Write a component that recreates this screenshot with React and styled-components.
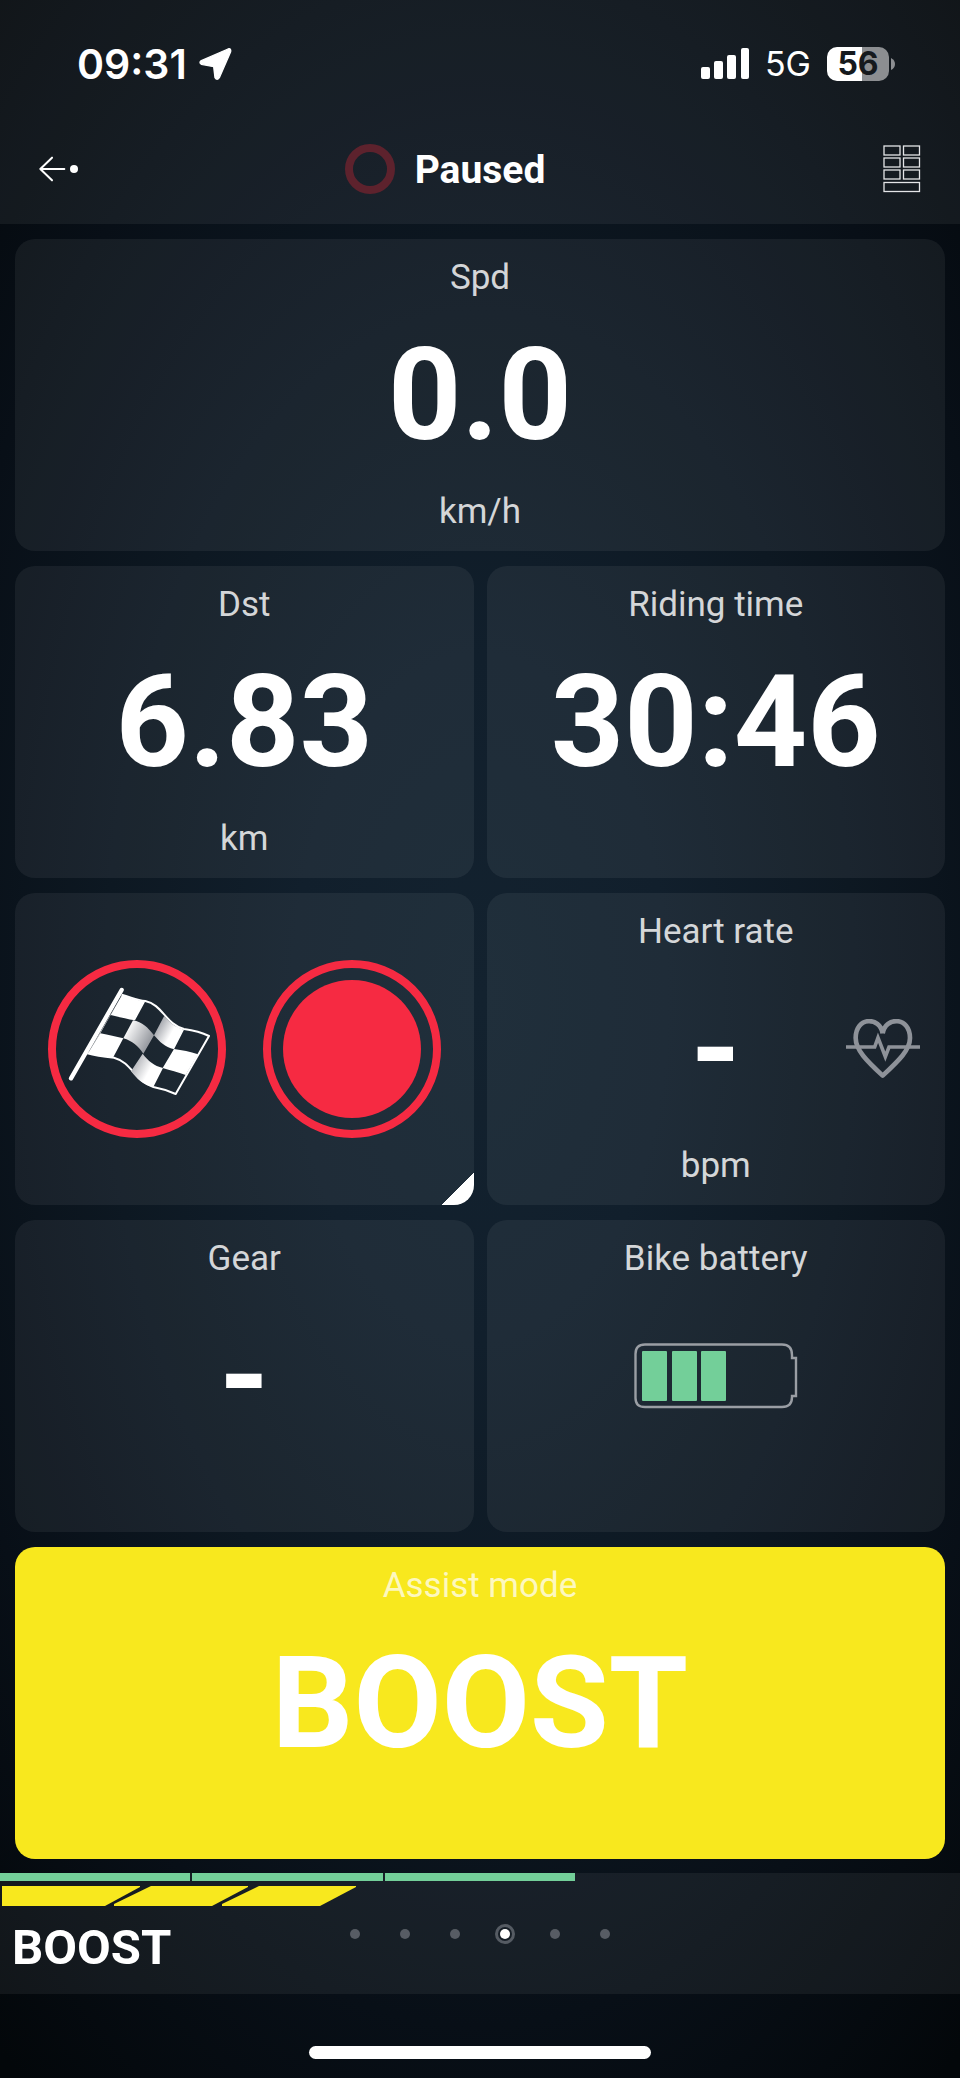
import React from "react";
import styled, { createGlobalStyle } from "styled-components";

const GlobalStyle = createGlobalStyle`
  *, *::before, *::after { box-sizing: border-box; }
  html, body { margin: 0; min-height: 100%; background: #03070b; }
  body { font-family: Roboto, "Liberation Sans", sans-serif; color: #fff; }
  button { appearance: none; border: 0; margin: 0; padding: 0; background: none; color: inherit; font: inherit; cursor: pointer; }
  svg { display: block; }
  h1, h2, p { margin: 0; }
`;

const panel = "rgba(255, 255, 255, 0.06)";

const Screen = styled.div`
  min-height: 100vh;
  display: flex;
  flex-direction: column;
  background: radial-gradient(ellipse 78% 66% at 50% 48%, #13222f 0%, #111f2c 25%, #0d1822 50%, #080f17 75%, #03070a 100%);
`;

const Header = styled.header`
  background: ${panel};
`;

const StatusBar = styled.div`
  display: flex;
  align-items: center;
  justify-content: space-between;
  height: 112px;
  padding: 16px 65px 0 77px;
  font-family: Inter, "Liberation Sans", sans-serif;
`;

const StatusGroup = styled.div`
  display: flex;
  align-items: center;
  gap: ${(p) => p.$gap}px;
`;

const Clock = styled.time`
  font-size: 41px;
  line-height: 48px;
  font-weight: 600;
`;

const Network = styled.span`
  font-size: 34px;
  line-height: 40px;
`;

const PhoneBattery = styled.div`
  display: flex;
  align-items: center;
  gap: 2px;
`;

const PhoneBatteryBody = styled.span`
  width: 62px;
  height: 34px;
  border-radius: 10px;
  background: linear-gradient(to right, #fff 56%, #8c8e91 56%);
  color: #15191d;
  font-size: 32px;
  line-height: 34px;
  font-weight: 700;
  text-align: center;
`;

const TitleBar = styled.div`
  display: flex;
  align-items: center;
  height: 112px;
  padding: 2px 39px 0;
`;

const Title = styled.div`
  flex: 1;
  display: flex;
  align-items: center;
  justify-content: center;
  gap: 20px;
  padding-right: 71px;
`;

const PausedRing = styled.span`
  width: 50px;
  height: 50px;
  border: 8px solid #5d222d;
  border-radius: 50%;
`;

const TitleText = styled.h1`
  padding-top: 2px;
  font-size: 39px;
  line-height: 48px;
  font-weight: 700;
`;

const Tiles = styled.main`
  display: grid;
  grid-template-columns: 1fr 1fr;
  gap: 15px 13px;
  padding: 15px 15px 14px;
`;

const Tile = styled.section`
  position: relative;
  display: flex;
  flex-direction: column;
  align-items: center;
  grid-column: ${(p) => (p.$wide ? "1 / -1" : "auto")};
  min-height: 312px;
  padding: 19px 20px;
  border-radius: 20px;
  background: ${(p) => (p.$accent ? "#f8e81e" : panel)};
  overflow: hidden;
`;

const Label = styled.h2`
  font-size: 35px;
  line-height: 40px;
  font-weight: 400;
  color: rgba(255, 255, 255, ${(p) => (p.$soft ? 0.72 : 0.82)});
`;

const Value = styled.div`
  display: flex;
  align-items: center;
  height: 150px;
  margin: 22px 0;
  font-size: 128px;
  line-height: 150px;
  font-weight: 700;
`;

const Unit = styled.p`
  font-size: 35px;
  line-height: 40px;
  color: rgba(255, 255, 255, 0.82);
`;

const SideIcon = styled.div`
  position: absolute;
  right: 25px;
  top: 50%;
  transform: translateY(-50%);
`;

const Actions = styled.div`
  flex: 1;
  display: flex;
  align-items: center;
  justify-content: center;
  gap: 37px;
`;

const RoundButton = styled.button`
  display: grid;
  place-items: center;
  width: 178px;
  height: 178px;
  border: 8px solid #f62a42;
  border-radius: 50%;
`;

const RecordDot = styled.span`
  width: 138px;
  height: 138px;
  border-radius: 50%;
  background: #f62a42;
`;

const Corner = styled.span`
  position: absolute;
  right: 0;
  bottom: 0;
  width: 32px;
  height: 32px;
  background: linear-gradient(135deg, transparent 50%, #fff 50%);
`;

const Footer = styled.footer`
  background: ${panel};
`;

const ChargeBar = styled.div`
  display: grid;
  grid-template-columns: repeat(5, 1fr);
  gap: 2px;
  height: 8px;
`;

const ChargeSegment = styled.span`
  background: ${(p) => (p.$on ? "#73cf99" : "transparent")};
`;

const AssistGauge = styled.div`
  padding: 5px 2px 0;
`;

const FooterRow = styled.div`
  display: grid;
  grid-template-columns: 1fr auto 1fr;
  align-items: start;
  height: 88px;
`;

const AssistName = styled.strong`
  padding: 13px 0 0 12px;
  font-size: 49px;
  line-height: 58px;
  font-weight: 700;
`;

const Pager = styled.nav`
  display: flex;
  gap: 30px;
  margin-top: 18px;
`;

const PageDot = styled.button`
  display: grid;
  place-items: center;
  width: 20px;
  height: 20px;
  border-radius: 50%;
  border: ${(p) => (p.$active ? "3px solid #555b63" : "0")};

  &::before {
    content: "";
    width: 10px;
    height: 10px;
    border-radius: 50%;
    background: ${(p) => (p.$active ? "#fff" : "#575c64")};
  }
`;

const HomeArea = styled.div`
  display: flex;
  justify-content: center;
  height: 84px;
  padding-top: 52px;
`;

const HomeBar = styled.span`
  width: 342px;
  height: 13px;
  border-radius: 7px;
  background: #fff;
`;

const LocationIcon = () => (
  <svg width="34" height="34" viewBox="597 142 102 102" aria-hidden="true">
    <path d="M604 183 L684 148 Q694 145 692 156 L658 234 Q651 244 645 234 L641 201 L604 194 Q596 188 604 183Z" fill="#fff" stroke="#fff" strokeWidth="4" strokeLinejoin="round" />
  </svg>
);

const SignalIcon = () => (
  <svg width="48" height="32" viewBox="0 0 48 32" fill="#fff" aria-hidden="true">
    <rect x="0" y="19" width="9" height="12" rx="2" />
    <rect x="13" y="13" width="9" height="18" rx="2" />
    <rect x="26" y="7" width="9" height="24" rx="2" />
    <rect x="40" y="0" width="8" height="31" rx="2" />
  </svg>
);

const BackIcon = () => (
  <svg width="39" height="26" viewBox="117 468 117 78" aria-hidden="true">
    <path d="M193 507H121M156 473L121 507L156 541" fill="none" stroke="#fff" strokeWidth="6" strokeLinecap="round" strokeLinejoin="round" />
    <circle cx="222" cy="507" r="12" fill="#fff" />
  </svg>
);

const LayoutIcon = () => (
  <svg width="38" height="48" viewBox="0 0 38 48" fill="none" stroke="#e4e5e7" strokeWidth="1.3" aria-hidden="true">
    {[1, 13, 25].map((y) => (
      <React.Fragment key={y}>
        <rect x="1" y={y} width="16" height="9" />
        <rect x="20.500" y={y} width="16" height="9" />
      </React.Fragment>
    ))}
    <rect x="1" y="37.500" width="35.500" height="9" />
  </svg>
);

const FlagIcon = () => (
  <svg width="162" height="162" viewBox="166 231 486 486" aria-hidden="true">
    <defs>
      <linearGradient id="fold1" gradientUnits="userSpaceOnUse" x1="382" y1="400" x2="452" y2="438">
        <stop offset="0" stopColor="#fff" />
        <stop offset="1" stopColor="#9a9da3" />
      </linearGradient>
      <linearGradient id="fold2" gradientUnits="userSpaceOnUse" x1="472" y1="398" x2="534" y2="432">
        <stop offset="0" stopColor="#9fa2a8" />
        <stop offset="0.700" stopColor="#fff" />
      </linearGradient>
      <linearGradient id="fold3" gradientUnits="userSpaceOnUse" x1="404" y1="510" x2="468" y2="545">
        <stop offset="0" stopColor="#b2b4b9" />
        <stop offset="0.700" stopColor="#fff" />
      </linearGradient>
    </defs>
    <path d="M363 297L211 562" stroke="#fff" strokeWidth="13" strokeLinecap="round" />
    <path d="M363 311C400 322 410 328 434 330C485 340 495 400 550 414C580 418 605 425 625 435L525 609C500 598 480 592 458 588C400 570 395 515 340 500C310 497 285 494 260 487" fill="none" stroke="#fff" strokeWidth="6" strokeLinejoin="round" />
    <path d="M364 312C395 322 410 328 434 331L403 388C378 384 355 378 330 372Z" fill="#fff" />
    <path d="M364 312L330 372L299 427L262 487Z" fill="#fff" />
    <path d="M299 427C325 432 345 437 368 442L337 500C310 497 285 494 262 487Z" fill="#fff" />
    <path d="M397 388C425 393 442 410 460 433L428 488C412 465 395 450 368 442Z" fill="url(#fold1)" />
    <path d="M491 374C508 397 525 409 550 416L520 475C492 469 477 452 460 433Z" fill="url(#fold2)" />
    <path d="M426 488C443 510 460 524 487 531L458 588C425 581 410 564 391 541Z" fill="url(#fold3)" />
    <path d="M520 474C545 477 568 482 592 490L555 552C530 543 510 538 486 531Z" fill="#fff" />
  </svg>
);

const HeartIcon = () => (
  <svg width="74" height="60" viewBox="1098 387 222 180" fill="none" stroke="#8e9299" aria-hidden="true">
    <path d="M1208 430C1200 380 1127 378 1127 444C1127 480 1160 512 1208 557C1256 512 1290 480 1290 444C1290 378 1216 380 1208 430" strokeWidth="14" strokeLinejoin="round" />
    <path d="M1098 471H1184L1194 443L1216 500L1227 471H1320" strokeWidth="11" />
  </svg>
);

const BikeBatteryIcon = () => (
  <svg width="164" height="66" viewBox="0 0 164 66" role="img" aria-label="Battery 3 of 5">
    <path d="M11 1.500H148Q158 1.500 158 12V15H162V53H158V54Q158 64 148 64H11Q1.500 64 1.500 55V11Q1.500 1.500 11 1.500Z" fill="none" stroke="#9a9ea4" strokeWidth="2.400" />
    {[8, 38, 67].map((x) => (
      <rect key={x} x={x} y="8" width="25" height="50" rx="1" fill="#73cf99" />
    ))}
  </svg>
);

const GaugeShapes = () => (
  <svg width="356" height="20" viewBox="0 0 356 20" fill="#f8e81e" aria-hidden="true">
    <path d="M0 0H138V1L103 20H0Z" />
    <path d="M149 0H246V1L210 20H112V18Z" />
    <path d="M257 0H354V1L318 20H220V18Z" />
  </svg>
);

const Metric = ({ label, value, unit, wide, accent, children }) => (
  <Tile $wide={wide} $accent={accent}>
    <Label $soft={accent}>{label}</Label>
    <Value>{value}</Value>
    {unit && <Unit>{unit}</Unit>}
    {children}
  </Tile>
);

export default function App() {
  return (
    <>
      <GlobalStyle />
      <Screen>
        <Header>
          <StatusBar>
            <StatusGroup $gap={12}>
              <Clock>09:31</Clock>
              <LocationIcon />
            </StatusGroup>
            <StatusGroup $gap={16}>
              <SignalIcon />
              <Network>5G</Network>
              <PhoneBattery>
                <PhoneBatteryBody>56</PhoneBatteryBody>
                <svg width="4" height="12" viewBox="0 0 4 12" aria-hidden="true">
                  <path d="M0 0Q4 2 4 6T0 12Z" fill="#8c8e91" />
                </svg>
              </PhoneBattery>
            </StatusGroup>
          </StatusBar>
          <TitleBar>
            <button type="button" aria-label="Back"><BackIcon /></button>
            <Title>
              <PausedRing />
              <TitleText>Paused</TitleText>
            </Title>
            <button type="button" aria-label="Layout"><LayoutIcon /></button>
          </TitleBar>
        </Header>

        <Tiles>
          <Metric wide label="Spd" value="0.0" unit="km/h" />
          <Metric label="Dst" value="6.83" unit="km" />
          <Metric label="Riding time" value="30:46" />
          <Tile>
            <Actions>
              <RoundButton type="button" aria-label="Finish"><FlagIcon /></RoundButton>
              <RoundButton type="button" aria-label="Record"><RecordDot /></RoundButton>
            </Actions>
            <Corner />
          </Tile>
          <Metric label="Heart rate" value="-" unit="bpm">
            <SideIcon><HeartIcon /></SideIcon>
          </Metric>
          <Metric label="Gear" value="-" />
          <Metric label="Bike battery" value={<BikeBatteryIcon />} />
          <Metric wide accent label="Assist mode" value="BOOST" />
        </Tiles>

        <Footer>
          <ChargeBar>
            {[0, 1, 2, 3, 4].map((i) => <ChargeSegment key={i} $on={i < 3} />)}
          </ChargeBar>
          <AssistGauge><GaugeShapes /></AssistGauge>
          <FooterRow>
            <AssistName>BOOST</AssistName>
            <Pager aria-label="Pages">
              {[1, 2, 3, 4, 5, 6].map((n) => (
                <PageDot key={n} type="button" aria-label={`Page ${n}`} $active={n === 4} />
              ))}
            </Pager>
          </FooterRow>
        </Footer>
        <HomeArea><HomeBar /></HomeArea>
      </Screen>
    </>
  );
}
